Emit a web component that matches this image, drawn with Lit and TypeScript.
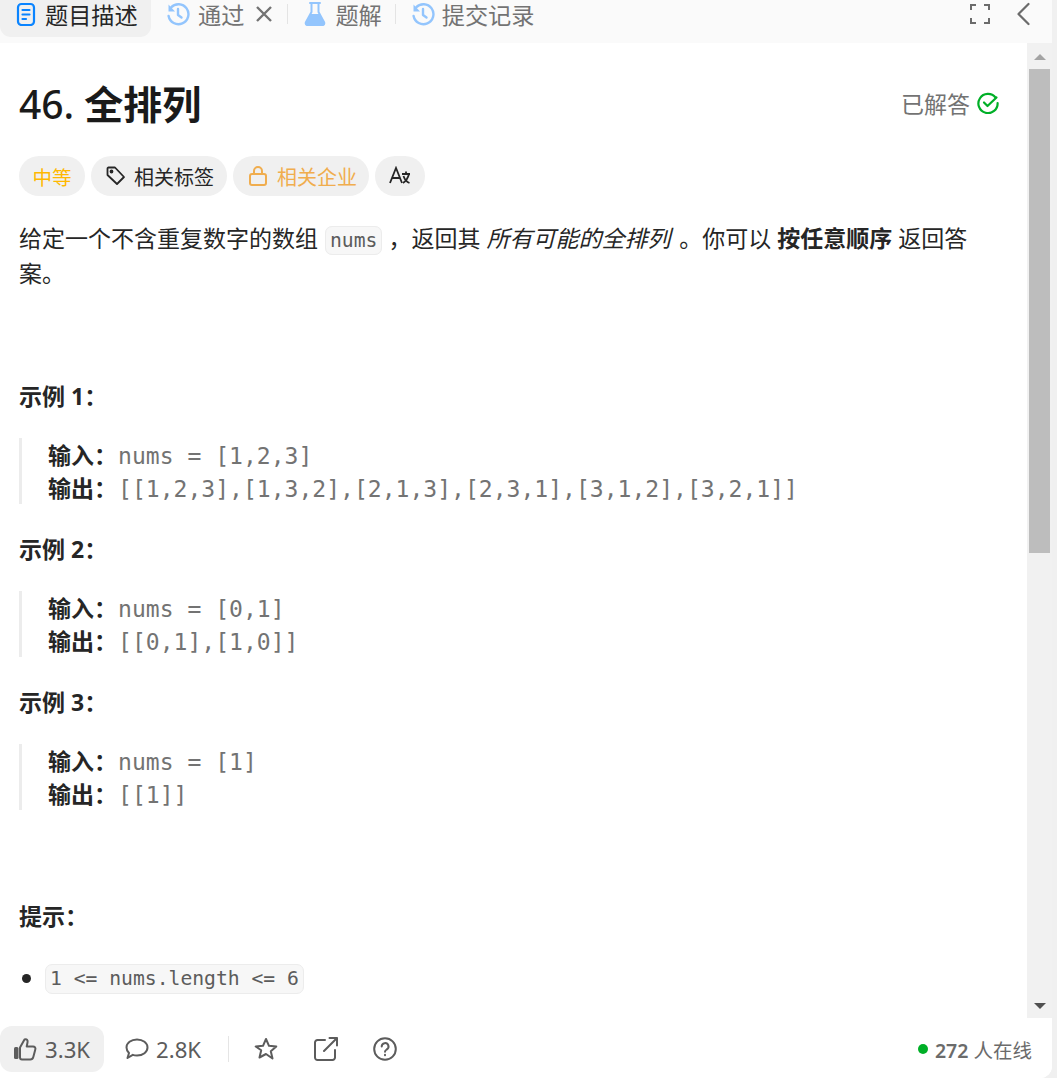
import { LitElement, html, css } from "lit";
import { customElement } from "lit/decorators.js";

const historyIcon = html`<svg class="ic24" viewBox="0 0 24 24" fill="none" stroke="#93c5fd" stroke-width="2.400" stroke-linecap="round" stroke-linejoin="round"><path d="M2.500 2.500l6.500 7H2.500z" stroke="none" fill="#93c5fd"/><path d="M5 5.500A10 10 0 1 1 2.600 14"/><path d="M12 7v6l3.500 2.500"/></svg>`;

@customElement("app-root")
export class AppRoot extends LitElement {
  static styles = css`
    :host { display: block; width: 1057px; height: 1078px; background: #f0f0f0; overflow: hidden; font-family: "Noto Sans", "Noto Sans CJK SC", sans-serif; color: #262626; }
    .panel { width: 1052px; height: 1078px; background: #fff; border-radius: 0 0 12px 0; display: flex; flex-direction: column; overflow: hidden; }
    .tabs { height: 43px; flex: none; background: #fafafa; display: flex; align-items: flex-start; font-size: 23.2px; color: #737373; }
    .tab { display: flex; align-items: center; height: 37px; padding-bottom: 9px; box-sizing: border-box; gap: 7px; white-space: nowrap; }
    .tab svg { flex: none; }
    .tab.active { background: #f0f0f0; color: #262626; border-radius: 0 0 11px 11px; padding: 0 13px 9px 16px; width: 151px; gap: 9px; }
    .t2 { margin-left: 15px; gap: 8px; }
    .t3 { margin-left: 16px; gap: 9px; }
    .t4 { margin-left: 15px; gap: 7px; }
    .sep { width: 1px; height: 20px; margin-top: 4px; background: #e4e4e4; flex: none; }
    .sep2 { margin-left: 13px; }
    .close { margin: 2px 14px 0 11px; flex: none; }
    .spacer { flex: 1; }
    .ic24 { width: 24px; height: 24px; }
    .right { display: flex; align-items: center; height: 28px; gap: 26px; padding-right: 22px; }
    .middle { flex: 1; min-height: 0; display: flex; }
    .content { flex: 1; min-width: 0; overflow: hidden; padding: 0 19px; box-sizing: border-box; }
    .titlerow { display: flex; align-items: center; justify-content: space-between; height: 52px; margin-top: 35px; padding-right: 9px; }
    h1 { margin: 0; font-size: 39px; font-weight: 700; line-height: 52px; color: #1a1a1a; }
    h1 span { font-weight: 500; }
    .solved { display: flex; align-items: center; gap: 7px; font-size: 23px; color: #737373; margin-bottom: 3px; }
    .chips { display: flex; gap: 6px; margin-top: 26px; }
    .chip { height: 40px; border-radius: 20px; background: #f0f0f0; display: flex; align-items: center; font-size: 20px; box-sizing: border-box; }
    .c1 { width: 66px; color: #ffb800; justify-content: center; font-size: 19.5px; }
    .c2 { width: 136px; color: #262626; padding-left: 15px; gap: 8px; }
    .c3 { width: 136px; color: #f0ad4e; padding-left: 16px; gap: 10px; }
    .c4 { width: 50px; justify-content: center; }
    .desc { margin: 0; margin-top: 25.5px; font-size: 23px; line-height: 33.5px; color: #262626; width: 975px; }
    code { font-family: "DejaVu Sans Mono", monospace; font-size: 19.7px; background: #f7f7f7; border: 1px solid #ececec; border-radius: 7px; padding: 2px 4px; color: #5c5c5c; }
    .desc code { margin-left: 1px; }
    em { font-style: italic; padding-right: 3px; }
    strong { font-weight: 700; color: #262626; }
    .h { margin: 0; font-size: 23px; font-weight: 700; line-height: 34px; color: #262626; }
    .h1st { margin-top: 88px; }
    .pre { margin: 25px 0 28px; border-left: 3px solid #ececec; padding-left: 26px; font-size: 23.05px; line-height: 33px; height: 66px; font-family: "DejaVu Sans Mono", "Noto Sans CJK SC", monospace; color: #737373; white-space: pre; }
    .pre b { font-family: "Noto Sans CJK SC", sans-serif; font-weight: 700; color: #262626; font-size: 23px; margin-right: 1px; }
    .pre div { height: 33px; }
    .hint { margin-top: 89px; }
    ul { margin: 29px 0 0; padding: 0; list-style: none; }
    li { display: flex; align-items: center; gap: 14px; height: 34px; }
    .dot { width: 9px; height: 9px; border-radius: 50%; background: #262626; margin-left: 3px; }
    li code { padding: 2px 4px 3px; }
    .scroll { width: 25px; flex: none; background: #f1f1f1; display: flex; flex-direction: column; align-items: center; }
    .arrow-up { width: 0; height: 0; border-left: 6px solid transparent; border-right: 6px solid transparent; border-bottom: 6px solid #a3a3a3; margin-top: 11px; }
    .thumb { width: 21px; height: 484px; background: #bdbdbd; margin-top: 9px; }
    .arrow-down { width: 0; height: 0; border-left: 6px solid transparent; border-right: 6px solid transparent; border-top: 6px solid #505050; margin-top: auto; margin-bottom: 9px; }
    .foot { height: 60px; flex: none; display: flex; align-items: center; font-size: 22.2px; color: #5c5c5c; background: #fff; padding-top: 2px; box-sizing: border-box; }
    .like { width: 104px; height: 46px; background: #f0f0f0; border-radius: 12px; display: flex; align-items: center; padding-left: 13px; gap: 7px; box-sizing: border-box; }
    .comm { display: flex; align-items: center; gap: 7px; margin-left: 21px; }
    .vsep { width: 1px; height: 26px; background: #e5e5e5; margin: 0 25px 0 27px; }
    .ficons { display: flex; align-items: center; gap: 35.500px; }
    .online { margin-left: auto; padding-right: 20px; display: flex; align-items: center; font-size: 19.5px; color: #6b6b6b; gap: 7px; }
    .gdot { width: 10px; height: 10px; border-radius: 50%; background: #00af27; }
    .online b { font-weight: 600; }
  `;

  private pre(a: string, b: string) {
    return html`<div class="pre"><div><b>输入：</b>${a}</div><div><b>输出：</b>${b}</div></div>`;
  }

  render() {
    return html`
      <div class="panel">
        <div class="tabs">
          <div class="tab active">
            <svg width="20" height="24" viewBox="0 0 20 24" fill="none" stroke="#0a84ff" stroke-width="2.200" stroke-linecap="round"><rect x="2" y="2" width="16" height="21" rx="3.500"/><path d="M6.500 8h7M6.500 12.500h7M6.500 17h3.500"/></svg>
            <span>题目描述</span>
          </div>
          <div class="tab t2">${historyIcon}<span>通过</span></div>
          <svg class="close" width="18" height="24" viewBox="0 0 18 24" fill="none" stroke="#737373" stroke-width="2.400"><path d="M2 5l14 14M16 5L2 19"/></svg>
          <div class="sep"></div>
          <div class="tab t3">
            <svg width="22" height="26" viewBox="0 0 22 26"><path d="M6 2h10M7.500 2v9L1.800 21.500A1.800 1.800 0 0 0 3.400 24h15.200a1.800 1.800 0 0 0 1.600-2.500L14.500 11V2" fill="none" stroke="#93c5fd" stroke-width="2" stroke-linecap="round"/><path d="M6.500 13h9l5 9.500a1.500 1.500 0 0 1-1.300 2H2.800a1.500 1.500 0 0 1-1.300-2z" fill="#93c5fd"/></svg>
            <span>题解</span>
          </div>
          <div class="sep sep2"></div>
          <div class="tab t4">${historyIcon}<span>提交记录</span></div>
          <div class="spacer"></div>
          <div class="right">
            <svg width="20" height="20" viewBox="0 0 20 20" fill="none" stroke="#6b6b6b" stroke-width="2"><path d="M1 6V1h5M14 1h5v5M19 14v5h-5M6 19H1v-5"/></svg>
            <svg width="14" height="24" viewBox="0 0 14 24" fill="none" stroke="#6b6b6b" stroke-width="2.200" stroke-linecap="round" stroke-linejoin="round"><path d="M12.500 2L2.500 12l10 10"/></svg>
          </div>
        </div>
        <div class="middle">
          <div class="content">
            <div class="titlerow">
              <h1><span>46.</span> 全排列</h1>
              <div class="solved">已解答
                <svg width="22" height="22" viewBox="0 0 22 22" fill="none" stroke="#00af27" stroke-width="2.200" stroke-linecap="round" stroke-linejoin="round"><path d="M18.500 5.500A9.600 9.600 0 1 0 20.600 11"/><path d="M7 10.500l3.500 3.500L19.500 5.500"/></svg>
              </div>
            </div>
            <div class="chips">
              <div class="chip c1">中等</div>
              <div class="chip c2">
                <svg width="20" height="20" viewBox="0 0 20 20" fill="none" stroke="#262626" stroke-width="1.800" stroke-linejoin="round"><path d="M1.500 2.500a1 1 0 0 1 1-1h6.500l9 9.500-7 7-9.500-9z"/><circle cx="5.500" cy="5.500" r="1" fill="#262626"/></svg>
                <span>相关标签</span>
              </div>
              <div class="chip c3">
                <svg width="18" height="20" viewBox="0 0 18 20" fill="none" stroke="#f0ad4e" stroke-width="2"><rect x="1" y="8" width="16" height="11" rx="2"/><path d="M5 8V5a4 4 0 0 1 8 0v3"/></svg>
                <span>相关企业</span>
              </div>
              <div class="chip c4">
                <svg width="22" height="20" viewBox="0 0 22 20" fill="none" stroke="#262626" stroke-width="1.800"><path d="M1 17L7 2l6 15M3.200 12h7.500"/><path d="M13 8h8M17 5.500V8M20 8c-1 4-3 7-6 9M14.500 10c1 3 3 6 6 7"/></svg>
              </div>
            </div>
            <p class="desc">给定一个不含重复数字的数组 <code>nums</code> ，返回其 <em>所有可能的全排列</em> 。你可以 <strong>按任意顺序</strong> 返回答案。</p>
            <div class="h h1st">示例 1：</div>
            ${this.pre("nums = [1,2,3]", "[[1,2,3],[1,3,2],[2,1,3],[2,3,1],[3,1,2],[3,2,1]]")}
            <div class="h">示例 2：</div>
            ${this.pre("nums = [0,1]", "[[0,1],[1,0]]")}
            <div class="h">示例 3：</div>
            ${this.pre("nums = [1]", "[[1]]")}
            <div class="h hint">提示：</div>
            <ul><li><span class="dot"></span><code>1 &lt;= nums.length &lt;= 6</code></li></ul>
          </div>
          <div class="scroll"><div class="arrow-up"></div><div class="thumb"></div><div class="arrow-down"></div></div>
        </div>
        <div class="foot">
          <div class="like">
            <svg width="25" height="24" viewBox="0 0 25 24" fill="none" stroke="#5c5c5c" stroke-width="2" stroke-linejoin="round"><rect x="1" y="10" width="4.500" height="12" rx="1.500" fill="#5c5c5c" stroke="none"/><path d="M7 10.500l4.500-8c2.500-1 3.500 1 3 3l-.8 4h6.300c1.800 0 2.800 1.500 2.300 3l-2 7.500c-.4 1.500-1.500 2.500-3 2.500H9c-1.200 0-2-.8-2-2z"/></svg>
            <span>3.3K</span>
          </div>
          <div class="comm">
            <svg width="24" height="22" viewBox="0 0 24 22" fill="none" stroke="#5c5c5c" stroke-width="2" stroke-linejoin="round"><path d="M12 1.500c6 0 10.500 3.500 10.500 8s-4.500 8-10.500 8c-1.500 0-3-.2-4.200-.7L2.500 20l1.500-5C2.500 13.500 1.500 11.500 1.500 9.500c0-4.500 4.500-8 10.500-8z"/></svg>
            <span>2.8K</span>
          </div>
          <div class="vsep"></div>
          <div class="ficons">
            <svg width="24" height="24" viewBox="0 0 24 24" fill="none" stroke="#5c5c5c" stroke-width="2" stroke-linejoin="round"><path d="M12 2l3 6.800 7.300.7-5.500 4.800 1.700 7.200L12 17l-6.500 3.500 1.700-7.200L1.700 9.500 9 8.800z"/></svg>
            <svg width="24" height="24" viewBox="0 0 24 24" fill="none" stroke="#5c5c5c" stroke-width="2" stroke-linecap="round" stroke-linejoin="round"><path d="M11 3H3.500A2.500 2.500 0 0 0 1 5.500v15A2.500 2.500 0 0 0 3.500 23h15a2.500 2.500 0 0 0 2.500-2.500V13"/><path d="M10 14L23 1M15.500 1H23v7.500"/></svg>
            <svg width="24" height="24" viewBox="0 0 24 24" fill="none" stroke="#5c5c5c" stroke-width="2" stroke-linecap="round"><circle cx="12" cy="12" r="10.800"/><path d="M8.700 9.500a3.400 3.400 0 1 1 5 3c-1 .6-1.700 1.200-1.700 2.300"/><path d="M12 17.800v.4"/></svg>
          </div>
          <div class="online"><span class="gdot"></span><span><b>272</b> 人在线</span></div>
        </div>
      </div>
    `;
  }
}
